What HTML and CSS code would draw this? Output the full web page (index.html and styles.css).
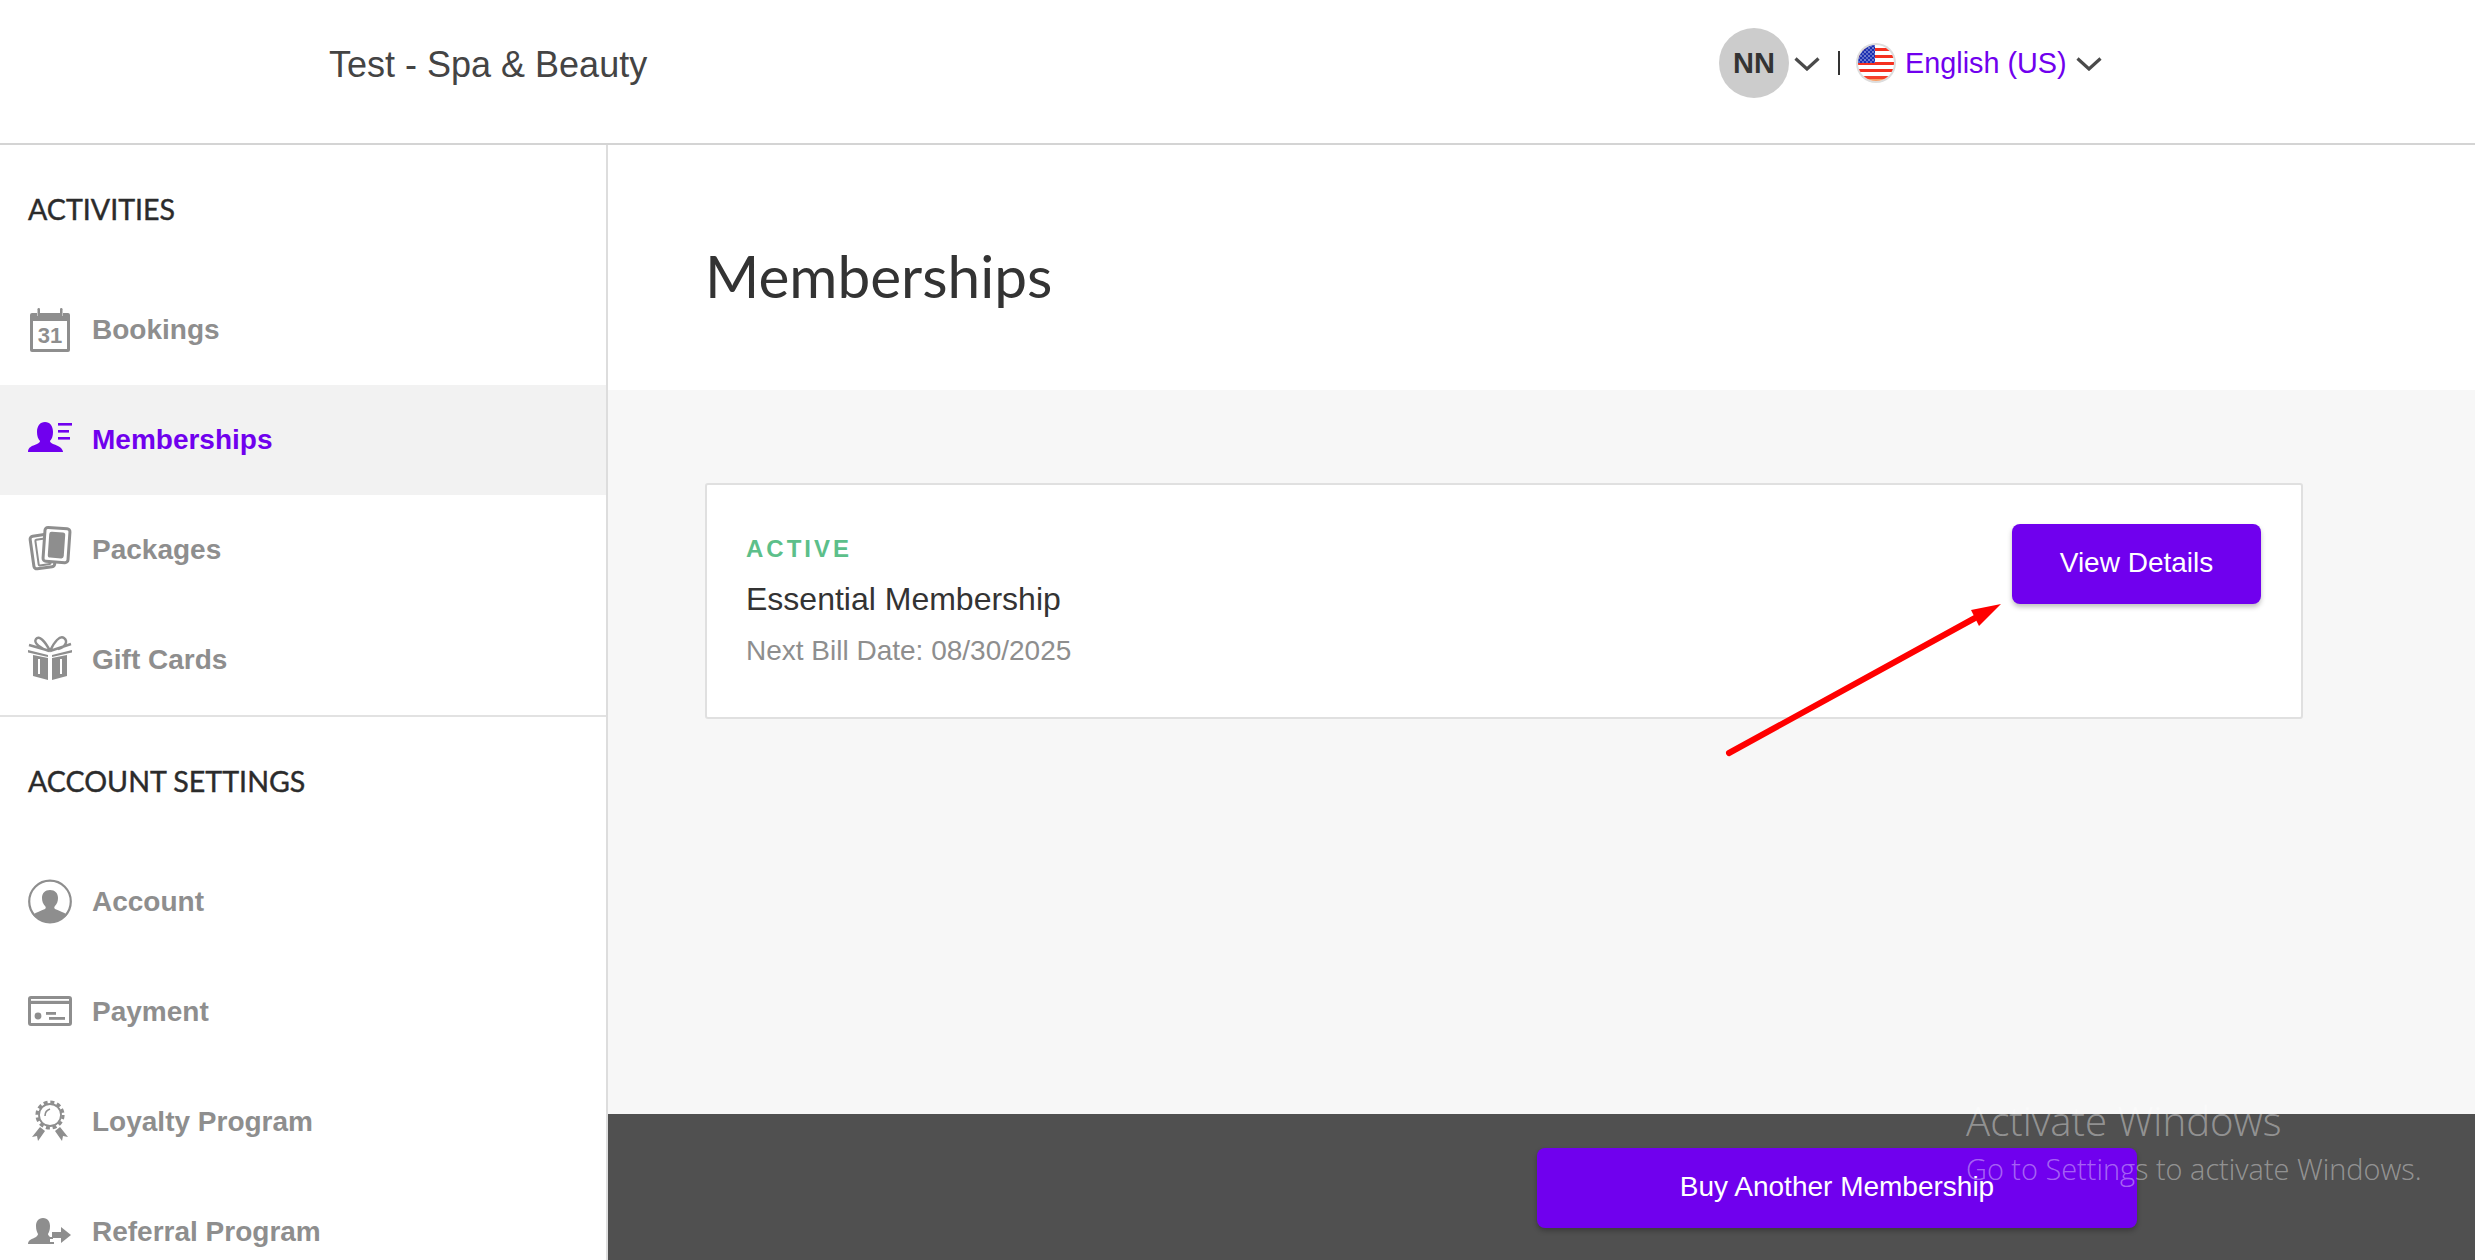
FILE: index.html
```html
<!DOCTYPE html>
<html lang="en">
<head>
  <meta charset="UTF-8" />
  <title>Memberships</title>
  <link rel="stylesheet" href="styles.css">
</head>
<body>
  <header class="topbar">
    <div class="biz-name">Test - Spa &amp; Beauty</div>
    <div class="topbar-right">
      <div class="avatar">NN</div>
      <svg class="chevron" viewBox="0 0 26 14"><path d="M1.5 1.5 13 12 24.5 1.5" /></svg>
      <span class="sep"></span>
      <svg class="flag" viewBox="0 0 40 40">
        <defs>
          <clipPath id="flagClip"><circle cx="20" cy="20" r="18" /></clipPath>
          <pattern id="stars" width="4" height="4" patternUnits="userSpaceOnUse">
            <circle cx="1" cy="1" r=".7" fill="#fff" />
            <circle cx="3" cy="3" r=".7" fill="#cdd4f2" />
          </pattern>
        </defs>
        <circle cx="20" cy="20" r="20" fill="#ddd" />
        <g clip-path="url(#flagClip)">
          <rect width="40" height="40" fill="#fff" />
          <rect y="5" width="40" height="3" fill="#f5301f" />
          <rect y="12" width="40" height="3" fill="#f5301f" />
          <rect y="19" width="40" height="3" fill="#f5301f" />
          <rect y="26" width="40" height="3" fill="#f5301f" />
          <rect y="33" width="40" height="3" fill="#f5402a" />
          <rect y="36" width="40" height="4" fill="#f7a06a" />
          <rect x="2" y="2" width="17" height="18" fill="#1c2fb0" />
          <rect x="2" y="2" width="17" height="18" fill="url(#stars)" />
        </g>
      </svg>
      <span class="lang">English (US)</span>
      <svg class="chevron" viewBox="0 0 26 14"><path d="M1.5 1.5 13 12 24.5 1.5" /></svg>
    </div>
  </header>

  <div class="layout">
    <aside class="sidebar">
      <section class="side-group">
        <h3 class="side-title">ACTIVITIES</h3>
        <a class="side-item">
          <svg class="side-icon" viewBox="0 0 44 44">
            <path d="M4 5h5v3h3V5h20v3h3V5h5a2 2 0 0 1 2 2v35a2 2 0 0 1-2 2H4a2 2 0 0 1-2-2V7a2 2 0 0 1 2-2zM5 13v28h34V13z" fill-rule="evenodd" />
            <rect x="9.500" y="0" width="2.500" height="9" rx="1.200" />
            <rect x="32" y="0" width="2.500" height="9" rx="1.200" />
            <text x="22" y="35" class="cal-num">31</text>
          </svg>
          <span>Bookings</span>
        </a>
        <a class="side-item active">
          <svg class="side-icon" viewBox="0 0 44 44">
            <path d="M0 34c0-5 4-6 9-8 2-1 3-2 3-3-2-2-3-5-3-9 0-6 3-10 8-10s8 4 8 10c0 4-1 7-3 9 0 1 1 2 3 3 3 1 6 2 8 4 1 1 2 3 2 4z" />
            <rect x="30" y="5" width="14" height="2.600" />
            <rect x="30" y="12" width="11" height="2.600" />
            <rect x="30" y="19" width="12" height="2.600" />
          </svg>
          <span>Memberships</span>
        </a>
        <a class="side-item">
          <svg class="side-icon" viewBox="0 0 44 44">
            <rect x="4" y="7" width="21" height="33" rx="3" transform="rotate(-8 14 24)" class="card-line" />
            <rect x="9" y="11" width="12" height="26" rx="1" transform="rotate(-8 14 24)" class="card-line thin" />
            <rect x="16" y="0" width="25" height="34" rx="3" transform="rotate(4 28 17)" class="card-line front" />
            <rect x="20.500" y="4" width="16" height="26" rx="2.500" transform="rotate(4 28 17)" />
          </svg>
          <span>Packages</span>
        </a>
        <a class="side-item">
          <svg class="side-icon" viewBox="0 0 44 44">
            <path d="M5 17 20 20V42L5 38zM24 20 39 17V38L24 42z" />
            <path d="M0 12 20 17V19L0 14.500zM44 12 24 17V19L44 14.500z" />
            <path d="M22 13C17 3 11 -3 8 1 5 5 13 11 21 13M22 13C26 4 32 -3 36 0 40 3 38 9 30 11M22 13 1 7M22 13 43 6" fill="none" stroke="#8e8e8e" stroke-width="2.400" />
            <rect x="10" y="21" width="2" height="15" fill="#fff" />
            <rect x="32" y="21" width="2" height="15" fill="#fff" />
          </svg>
          <span>Gift Cards</span>
        </a>
      </section>

      <section class="side-group second">
        <h3 class="side-title">ACCOUNT SETTINGS</h3>
        <a class="side-item">
          <svg class="side-icon" viewBox="0 0 44 44">
            <circle cx="22" cy="21.500" r="20.800" fill="none" stroke="#8e8e8e" stroke-width="2.200" />
            <path d="M5 35c3-3 8-4 12-6 1-1 1-2 0-3-2-2-3-5-3-8 0-5 3-8 8-8s8 3 8 8c0 3-1 6-3 8-1 1-1 2 0 3 4 2 9 3 12 6-4 4-10 7-17 7S9 39 5 35z" />
          </svg>
          <span>Account</span>
        </a>
        <a class="side-item">
          <svg class="side-icon" viewBox="0 0 44 44">
            <path d="M3 6h38a3 3 0 0 1 3 3v24a3 3 0 0 1-3 3H3a3 3 0 0 1-3-3V9a3 3 0 0 1 3-3zM3 14v19h38V14z" fill-rule="evenodd" />
            <rect x="3" y="9" width="38" height="1.800" fill="#fff" />
            <circle cx="10" cy="26" r="3.400" />
            <rect x="18" y="22" width="10" height="2.800" />
            <rect x="21" y="27" width="16" height="2.800" />
          </svg>
          <span>Payment</span>
        </a>
        <a class="side-item">
          <svg class="side-icon" viewBox="0 0 44 44">
            <circle cx="22" cy="15" r="13" fill="none" stroke="#8e8e8e" stroke-width="3.200" stroke-dasharray="4 2.800" />
            <circle cx="22" cy="15" r="11" fill="none" stroke="#8e8e8e" stroke-width="1.800" />
            <path d="M17 16c0-4 2-6 5-7" fill="none" stroke="#8e8e8e" stroke-width="1.600" />
            <path d="M12 27 4 37 9 36 10 41 17 31zM32 27 40 37 35 36 34 41 27 31z" />
          </svg>
          <span>Loyalty Program</span>
        </a>
        <a class="side-item">
          <svg class="side-icon" viewBox="0 0 44 44">
            <path d="M0 34c0-4 4-5 8-7 1-1 2-2 2-3-1-2-2-4-2-8 0-4 2-8 7-8s7 4 7 8c0 4-1 6-2 8 0 1 1 2 2 3h3v2h-3v3h4v2z" />
            <path d="M24 22h9v-5l10 8-10 8v-5h-9z" />
          </svg>
          <span>Referral Program</span>
        </a>
      </section>
    </aside>

    <main class="content">
      <div class="page-head">
        <h1>Memberships</h1>
      </div>

      <div class="page-body">
        <div class="card">
          <div class="card-info">
            <div class="status">ACTIVE</div>
            <div class="plan">Essential Membership</div>
            <div class="bill">Next Bill Date: 08/30/2025</div>
          </div>
          <button class="btn" type="button">View Details</button>
        </div>
      </div>

      <footer class="page-foot">
        <button class="btn btn-wide" type="button">Buy Another Membership</button>
      </footer>
    </main>
  </div>

  <!-- red annotation arrow drawn on top of the screenshot -->
  <svg class="arrow" viewBox="0 0 290 170">
    <path d="M4 165 250 30" stroke="#f00" stroke-width="6" stroke-linecap="round" fill="none" />
    <path d="M276 16 246 22 254 38z" fill="#f00" />
  </svg>

  <div class="watermark">
    <div class="wm-title">Activate Windows</div>
    <div class="wm-sub">Go to Settings to activate Windows.</div>
  </div>
</body>
</html>
```

FILE: styles.css
```css
* {
  box-sizing: border-box;
}
html, body {
  margin: 0;
  height: 1260px;
  overflow: hidden;
}
body {
  font-family: "Liberation Sans", Arial, sans-serif;
  color: #333;
  background: #fff;
  position: relative;
}

/* top bar */
.topbar {
  display: flex;
  align-items: center;
  height: 145px;
  padding-left: 329px;
  padding-bottom: 17px;
  border-bottom: 2px solid #d4d4d4;
}
.biz-name {
  font-size: 36px;
  color: #444;
  width: 1390px;
  margin-top: 3px;
}
.topbar-right {
  display: flex;
  align-items: center;
}
.avatar {
  width: 70px;
  height: 70px;
  border-radius: 50%;
  background: #ccc;
  color: #333;
  font-size: 29px;
  font-weight: bold;
  display: flex;
  align-items: center;
  justify-content: center;
}
.chevron {
  width: 26px;
  height: 14px;
  margin-left: 5px;
  margin-top: 2px;
  fill: none;
  stroke: #4a4a4a;
  stroke-width: 3.200;
}
.sep {
  width: 2px;
  height: 24px;
  background: #333;
  margin-left: 18px;
  margin-right: 16px;
}
.flag {
  width: 40px;
  height: 40px;
}
.lang {
  font-size: 28.800px;
  color: #7000ee;
  margin-left: 9px;
  margin-right: 4px;
}

/* sidebar + main */
.layout {
  display: grid;
  grid-template-columns: 608px 1fr;
  height: 1115px;
}
.sidebar {
  border-right: 2px solid #ddd;
  overflow: hidden;
}
.side-group.second {
  border-top: 2px solid #e2e2e2;
}
.side-title {
  margin: 0;
  height: 130px;
  padding-left: 28px;
  padding-bottom: 3px;
  display: flex;
  align-items: center;
  font-family: Lato, sans-serif;
  font-size: 28.600px;
  font-weight: 400;
  -webkit-text-stroke: .4px #2b2b2b;
  color: #2b2b2b;
}
.side-item {
  display: flex;
  align-items: center;
  gap: 20px;
  height: 110px;
  padding-left: 28px;
  font-size: 28px;
  font-weight: bold;
  color: #8e8e8e;
}
.side-item.active {
  background: #f2f2f2;
  color: #7000ee;
}
.side-icon {
  width: 44px;
  height: 44px;
  fill: #8e8e8e;
  overflow: visible;
  flex-shrink: 0;
}
.side-item.active .side-icon {
  fill: #7000ee;
}
.cal-num {
  font-size: 22px;
  text-anchor: middle;
}
.card-line {
  fill: none;
  stroke: #8e8e8e;
  stroke-width: 3;
}
.card-line.thin {
  stroke-width: 2;
}
.card-line.front {
  fill: #fff;
}

.content {
  display: flex;
  flex-direction: column;
  min-width: 0;
}
.page-head {
  height: 245px;
  padding-left: 97px;
  padding-top: 14px;
  display: flex;
  align-items: center;
}
.page-head h1 {
  margin: 0;
  font-family: Lato, sans-serif;
  font-size: 58.500px;
  font-weight: 400;
  color: #333;
}
.page-body {
  flex: 1;
  background: #f7f7f7;
  padding: 93px 172px 0 97px;
}
.card {
  height: 236px;
  background: #fff;
  border: 2px solid #e0e0e0;
  border-radius: 3px;
  padding: 39px 40px 0 39px;
  display: flex;
  justify-content: space-between;
  align-items: flex-start;
}
.status {
  font-size: 24px;
  font-weight: bold;
  letter-spacing: 3px;
  color: #5cbf8a;
  margin-top: 11px;
  line-height: 28px;
}
.plan {
  font-size: 32px;
  color: #333;
  line-height: 37px;
  margin-top: 18px;
}
.bill {
  font-size: 28px;
  color: #8e8e8e;
  line-height: 32px;
  margin-top: 17px;
}
.btn {
  width: 249px;
  height: 80px;
  border: none;
  border-radius: 8px;
  background: #7000ee;
  color: #fff;
  font-family: "Liberation Sans", Arial, sans-serif;
  font-size: 28px;
  padding-bottom: 3px;
  box-shadow: 0 3px 5px rgba(0, 0, 0, .25);
}
.btn-wide {
  width: 600px;
}
.page-foot {
  height: 146px;
  background: #505050;
  padding: 34px 0 0 929px;
}

/* things lying over the page */
.arrow {
  position: absolute;
  left: 1725px;
  top: 588px;
  width: 290px;
  height: 170px;
}
.watermark {
  position: absolute;
  left: 1966px;
  top: 1096px;
  color: rgba(255, 255, 255, .4);
  font-family: "Open Sans", sans-serif;
  font-weight: 300;
  pointer-events: none;
}
.wm-title {
  font-size: 40.200px;
  line-height: 50px;
}
.wm-sub {
  font-size: 28.900px;
  line-height: 36px;
  margin-top: 5px;
}
```
